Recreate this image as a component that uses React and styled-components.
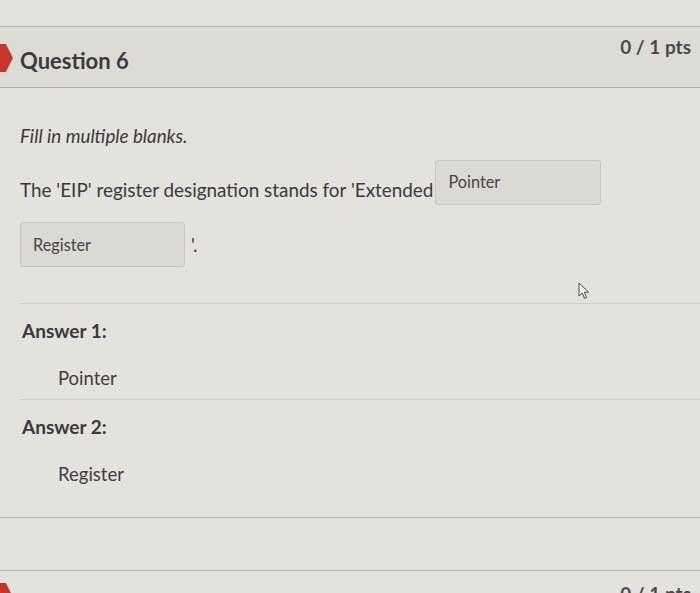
import React from "react";
import styled, { createGlobalStyle } from "styled-components";

const GlobalStyle = createGlobalStyle`
  html, body {
    margin: 0;
    padding: 0;
  }
  body {
    background: #e3e2dd;
    font-family: Lato, "Open Sans", sans-serif;
    color: #3a3a3a;
    overflow: hidden;
  }
`;

const Page = styled.div`
  width: 700px;
  height: 593px;
  overflow: hidden;
  position: relative;
`;

const TopSpace = styled.div`
  height: 26px;
  border-bottom: 1px solid #aeada8;
`;

const Header = styled.div`
  position: relative;
  height: 60px;
  background: #dcdbd6;
  border-bottom: 1px solid #b0afaa;
  display: flex;
  justify-content: space-between;
  align-items: flex-start;
  padding: 0 9px 0 20px;
`;

const Marker = styled.div`
  position: absolute;
  left: 0;
  top: ${(p) => p.$top}px;
  width: 13px;
  height: 28px;
  background: #c8352d;
  clip-path: polygon(0 0, 45% 0, 100% 50%, 45% 100%, 0 100%);
`;

const QuestionTitle = styled.div`
  font-size: 22px;
  font-weight: 700;
  color: #3b3b3b;
  margin-top: 20px;
`;

const Points = styled.div`
  font-size: 19px;
  font-weight: 700;
  color: #4a4a4a;
  margin-top: 8px;
`;

const Body = styled.div`
  padding: 0 0 0 20px;
`;

const Instructions = styled.div`
  font-size: 18.8px;
  font-style: italic;
  color: #3a3a3a;
  margin-top: 36px;
`;

const Line = styled.div`
  display: flex;
  align-items: ${(p) => p.$align || "flex-end"};
  margin-top: ${(p) => p.$top}px;
`;

const Sentence = styled.span`
  font-size: 18.9px;
  line-height: 22px;
  padding-bottom: ${(p) => p.$pb || 0}px;
  padding-left: ${(p) => p.$pl || 0}px;
  color: #3a3a3a;
`;

const Blank = styled.div`
  box-sizing: border-box;
  width: ${(p) => p.$w}px;
  height: 45px;
  margin-left: ${(p) => p.$ml || 0}px;
  background: #dad9d4;
  border: 1px solid #c7c6c1;
  border-radius: 3px;
  padding: ${(p) => p.$pt}px 0 0 12px;
  font-size: 16.3px;
  color: #454545;
`;

const Divider = styled.div`
  height: 0;
  border-top: 1px solid ${(p) => p.$color || "#cfcec9"};
  margin-left: ${(p) => p.$ml || 0}px;
  margin-top: ${(p) => p.$top}px;
`;

const AnswerLabel = styled.div`
  font-size: 19px;
  font-weight: 700;
  color: #3a3a3a;
  margin: ${(p) => p.$top}px 0 0 2px;
`;

const AnswerValue = styled.div`
  font-size: 18.5px;
  color: #3f3f3f;
  margin: 25px 0 0 38px;
`;

const Footer = styled.div`
  position: relative;
  height: 40px;
  display: flex;
  justify-content: flex-end;
  padding-right: 9px;
`;

const FooterPoints = styled.div`
  font-size: 19px;
  font-weight: 700;
  color: #4a4a4a;
  margin-top: 11px;
`;

const Cursor = styled.svg`
  position: absolute;
  left: 577px;
  top: 282px;
`;

export default function App() {
  return (
    <Page>
      <GlobalStyle />
      <TopSpace />
      <Header>
        <Marker $top={17} />
        <QuestionTitle>Question 6</QuestionTitle>
        <Points>0 / 1 pts</Points>
      </Header>
      <Body>
        <Instructions>Fill in multiple blanks.</Instructions>
        <Line $top={13}>
          <Sentence $pb={4}>The 'EIP' register designation stands for 'Extended</Sentence>
          <Blank $w={166} $ml={2} $pt={11}>Pointer</Blank>
        </Line>
        <Line $top={17} $align="center">
          <Blank $w={165} $pt={12}>Register</Blank>
          <Sentence $pl={6}>'.</Sentence>
        </Line>
        <Divider $top={36} />
        <AnswerLabel $top={15}>Answer 1:</AnswerLabel>
        <AnswerValue>Pointer</AnswerValue>
        <Divider $top={10} />
        <AnswerLabel $top={15}>Answer 2:</AnswerLabel>
        <AnswerValue>Register</AnswerValue>
      </Body>
      <Divider $top={32} $color="#b3b2ad" />
      <Divider $top={52} $color="#b3b2ad" />
      <Footer>
        <Marker $top={12} />
        <FooterPoints>0 / 1 pts</FooterPoints>
      </Footer>
      <Cursor width="16" height="18" viewBox="0 0 16 18">
        <path
          d="M2 1 L2 14 L5.2 11 L7.6 16.4 L9.6 15.5 L7.3 10.2 L11.6 10.2 Z"
          fill="#f4f3ef"
          stroke="#4a4a4a"
          strokeWidth="1"
          strokeLinejoin="round"
        />
      </Cursor>
    </Page>
  );
}
